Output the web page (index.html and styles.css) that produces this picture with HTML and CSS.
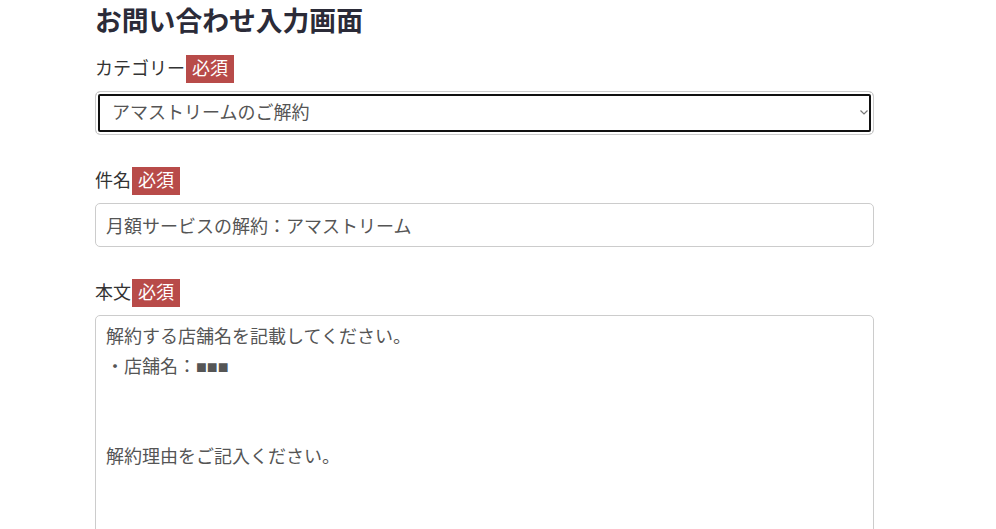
FILE: index.html
```html
<!DOCTYPE html>
<html lang="ja">
<head>
<meta charset="utf-8">
<title>お問い合わせ入力画面</title>
<link rel="stylesheet" href="styles.css">
</head>
<body>
<main class="page">
  <h1 class="title">お問い合わせ入力画面</h1>
  <form class="form">
    <div class="group">
      <label class="label" for="category">カテゴリー<span class="badge">必須</span></label>
      <div class="select-wrap">
        <select id="category" class="control select is-focused">
          <option>アマストリームのご解約</option>
        </select>
        <svg class="chevron" width="8" height="5" viewBox="0 0 8 5" aria-hidden="true"><path d="M0.5 0.5 L4 4 L7.5 0.5" fill="none" stroke="#777" stroke-width="1.2"/></svg>
      </div>
    </div>
    <div class="group">
      <label class="label" for="subject">件名<span class="badge">必須</span></label>
      <input id="subject" class="control input" type="text" value="月額サービスの解約：アマストリーム">
    </div>
    <div class="group">
      <label class="label" for="body">本文<span class="badge">必須</span></label>
      <textarea id="body" class="control textarea">解約する店舗名を記載してください。
・店舗名：■■■


解約理由をご記入ください。</textarea>
    </div>
  </form>
</main>
</body>
</html>
```
FILE: styles.css
```css
* { box-sizing: border-box; }
html, body { margin: 0; padding: 0; background: #fff; }
body {
  font-family: "Liberation Sans", "Noto Sans CJK JP", sans-serif;
  color: #333;
  overflow: hidden;
}
.page {
  width: 779px;
  margin-left: 95px;
  padding-top: 6px;
}
.title {
  margin: 0;
  font-size: 26.8px;
  line-height: 32px;
  font-weight: 700;
  color: #2b2b38;
}
.form { margin-top: 17px; }
.group { margin-bottom: 32px; }
.label {
  display: flex;
  align-items: center;
  height: 28px;
  margin-bottom: 8px;
  font-size: 18px;
  line-height: 28px;
  color: #333;
}
.badge {
  display: inline-block;
  margin-left: 1px;
  padding: 0 6px;
  height: 28px;
  line-height: 28px;
  font-size: 18px;
  color: #fff;
  background: #b84b49;
}
.control {
  display: block;
  width: 100%;
  margin: 0;
  font-family: "Liberation Sans", "Noto Sans CJK JP", sans-serif;
  font-size: 18px;
  color: #555;
  background: #fff;
  border: 1px solid #ccc;
  border-radius: 5px;
}
.select-wrap { position: relative; }
.select {
  appearance: none;
  -webkit-appearance: none;
  height: 44px;
  padding: 0 16px;
  line-height: 42px;
  outline: none;
}
.select.is-focused {
  box-shadow: inset 0 0 0 2px #fff, inset 0 0 0 4px #111;
}
.chevron {
  position: absolute;
  right: 6px;
  top: 19px;
}
.input {
  height: 44px;
  padding: 0 10px;
  line-height: 42px;
  outline: none;
}
.textarea {
  height: 300px;
  padding: 6px 10px;
  line-height: 30px;
  resize: none;
  outline: none;
  overflow: hidden;
}
```
